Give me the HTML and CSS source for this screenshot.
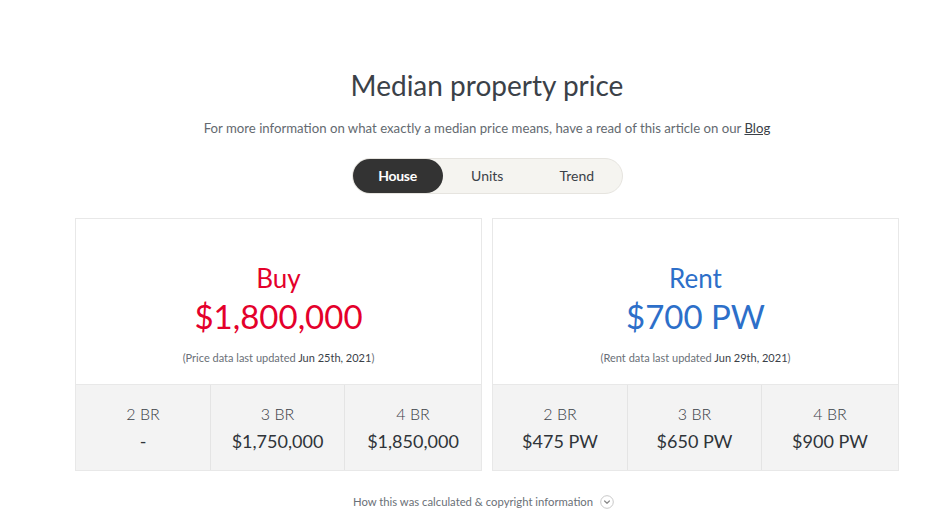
FILE: index.html
```html
<!DOCTYPE html>
<html>
<head>
<meta charset="utf-8">
<link rel="stylesheet" href="styles.css">
</head>
<body>
<main class="wrap">
  <h1 class="title">Median property price</h1>
  <p class="sub">For more information on what exactly a median price means, have a read of this article on our <a href="#" class="link">Blog</a></p>
  <div class="toggle-row">
    <div class="toggle">
      <span class="tab active">House</span>
      <span class="tab">Units</span>
      <span class="tab">Trend</span>
    </div>
  </div>
  <div class="cards">
    <section class="card">
      <div class="card-top">
        <div class="kind buy">Buy</div>
        <div class="price buy">$1,800,000</div>
        <div class="note">(Price data last updated <span class="date">Jun 25th, 2021</span>)</div>
      </div>
      <div class="card-bottom">
        <div class="cell"><div class="br">2 BR</div><div class="val">-</div></div>
        <div class="cell"><div class="br">3 BR</div><div class="val">$1,750,000</div></div>
        <div class="cell"><div class="br">4 BR</div><div class="val">$1,850,000</div></div>
      </div>
    </section>
    <section class="card">
      <div class="card-top">
        <div class="kind rent">Rent</div>
        <div class="price rent">$700 PW</div>
        <div class="note">(Rent data last updated <span class="date">Jun 29th, 2021</span>)</div>
      </div>
      <div class="card-bottom">
        <div class="cell"><div class="br">2 BR</div><div class="val">$475 PW</div></div>
        <div class="cell"><div class="br">3 BR</div><div class="val">$650 PW</div></div>
        <div class="cell"><div class="br">4 BR</div><div class="val">$900 PW</div></div>
      </div>
    </section>
  </div>
  <div class="footer">
    <span class="foot-text">How this was calculated &amp; copyright information</span>
    <svg class="chev" width="14" height="14" viewBox="0 0 14 14"><circle cx="7" cy="7" r="6.3" fill="none" stroke="#c8c8c8" stroke-width="1"/><path d="M4.6 6 L7 8.3 L9.4 6" fill="none" stroke="#8a8a8a" stroke-width="1.2" stroke-linecap="round" stroke-linejoin="round"/></svg>
  </div>
</main>
</body>
</html>
```

FILE: styles.css
```css
html, body {
  margin: 0;
  padding: 0;
  background: #ffffff;
}
body {
  font-family: Lato, "Noto Sans", "Liberation Sans", sans-serif;
  color: #3b4148;
}
.wrap {
  width: 824px;
  margin-left: 75px;
  padding-top: 68px;
  display: flex;
  flex-direction: column;
  align-items: stretch;
}
.title {
  margin: 0;
  text-align: center;
  font-size: 28px;
  font-weight: 400;
  line-height: 34px;
  color: #3b4148;
}
.sub {
  margin: 17px 0 0;
  text-align: center;
  font-size: 13.2px;
  line-height: 18px;
  color: #646a70;
}
.link {
  color: #3b4148;
  text-decoration: underline;
}
.toggle-row {
  display: flex;
  justify-content: center;
  margin-top: 21px;
}
.toggle {
  display: flex;
  height: 34px;
  width: 269px;
  padding: 0;
  border: 1px solid #e6e4df;
  border-radius: 18px;
  background: #f5f4f0;
  align-items: center;
}
.tab {
  flex: 1;
  height: 34px;
  line-height: 34px;
  text-align: center;
  font-size: 14px;
  color: #3b4148;
}
.tab.active {
  flex: 0 0 90px;
  background: #333333;
  color: #ffffff;
  font-weight: 700;
  border-radius: 18px;
  letter-spacing: -0.3px;
}
.cards {
  display: grid;
  grid-template-columns: 1fr 1fr;
  gap: 10px;
  margin-top: 24px;
}
.card {
  border: 1px solid #e8e8e8;
  display: flex;
  flex-direction: column;
}
.card-top {
  height: 166px;
  display: flex;
  flex-direction: column;
  align-items: center;
  padding-top: 43px;
  box-sizing: border-box;
  border-bottom: 1px solid #e8e8e8;
}
.kind {
  font-size: 26px;
  line-height: 32px;
}
.price {
  font-size: 33px;
  line-height: 40px;
  margin-top: 2px;
}
.buy { color: #e4002b; }
.rent { color: #2d6fc9; }
.note {
  margin-top: 15px;
  font-size: 11px;
  line-height: 14px;
  color: #6a7077;
}
.date { color: #3b4148; }
.card-bottom {
  display: grid;
  grid-template-columns: 134px 134px 1fr;
  background: #f3f3f3;
  height: 85px;
}
.cell {
  display: flex;
  flex-direction: column;
  align-items: center;
  padding-top: 19px;
  border-left: 1px solid #e4e4e4;
}
.cell:first-child { border-left: none; }
.br {
  font-size: 16px;
  line-height: 20px;
  font-weight: 300;
  color: #3b4148;
}
.val {
  margin-top: 6px;
  font-size: 18px;
  line-height: 22px;
  color: #2f3439;
}
.footer {
  display: flex;
  justify-content: center;
  align-items: center;
  gap: 7px;
  margin-top: 23px;
  padding-right: 7px;
}
.foot-text {
  font-size: 11.3px;
  line-height: 16px;
  color: #6a7077;
}
.chev { display: block; }
```
